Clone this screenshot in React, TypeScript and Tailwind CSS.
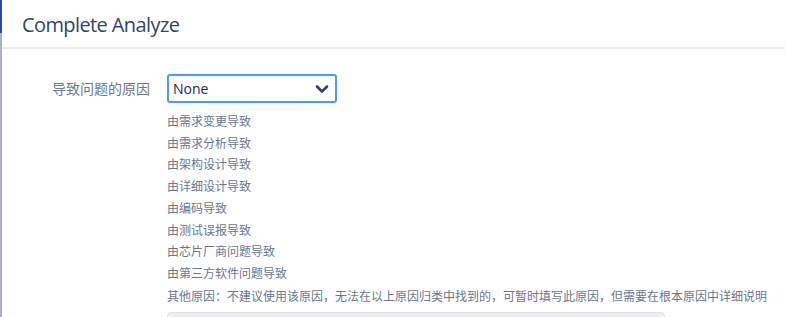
import React from "react";

const cjk = { fontFamily: '"Noto Sans CJK SC", "Noto Sans", sans-serif' };

const options = [
  "由需求变更导致",
  "由需求分析导致",
  "由架构设计导致",
  "由详细设计导致",
  "由编码导致",
  "由测试误报导致",
  "由芯片厂商问题导致",
  "由第三方软件问题导致",
];

export default function App() {
  return (
    <div className="w-[785px] h-[317px] overflow-hidden bg-white flex">
      <div className="w-[2px] flex flex-col shrink-0">
        <div className="h-[33px] bg-[#2c4a9a]" />
        <div className="flex-1 bg-[#a9b0c0]" />
      </div>
      <div className="flex-1 flex flex-col">
        <div className="h-[49px] flex items-center pl-[20px] border-b-2 border-[#ebecf0] shrink-0">
          <span
            className="text-[20px] font-normal text-[#344563] leading-none pt-[2px]"
            style={{ fontFamily: '"Open Sans", "Noto Sans", sans-serif', letterSpacing: "-0.6px" }}
          >
            Complete Analyze
          </span>
        </div>
        <div className="flex pt-[25px]">
          <div
            className="w-[148px] shrink-0 text-right text-[14px] text-[#6b778c] leading-[28px]"
            style={cjk}
          >
            导致问题的原因
          </div>
          <div className="ml-[17px] flex flex-col">
            <div className="w-[170px] h-[29px] border-2 border-[#4c9aff] rounded-[3px] flex items-center justify-between pl-[4px] pr-[6px]">
              <span
                className="text-[14px] text-[#172b4d]"
                style={{ fontFamily: '"Open Sans", "Noto Sans", sans-serif' }}
              >
                None
              </span>
              <svg width="14" height="10" viewBox="0 0 14 10" fill="none">
                <path
                  d="M2 2.5 L7 7.5 L12 2.5"
                  stroke="#344563"
                  strokeWidth="2.6"
                  strokeLinecap="round"
                  strokeLinejoin="round"
                />
              </svg>
            </div>
            <div className="mt-[7px] flex flex-col text-[12px] leading-[21.7px] text-[#6b778c]" style={cjk}>
              {options.map((o) => (
                <div key={o}>{o}</div>
              ))}
              <div className="mt-[1px] whitespace-nowrap">
                其他原因：不建议使用该原因，无法在以上原因归类中找到的，可暂时填写此原因，但需要在根本原因中详细说明
              </div>
            </div>
            <div className="mt-[6px] w-[498px] h-[20px] rounded-[4px] bg-[#ebecf0] border border-[#dfe1e6]" />
          </div>
        </div>
      </div>
    </div>
  );
}
